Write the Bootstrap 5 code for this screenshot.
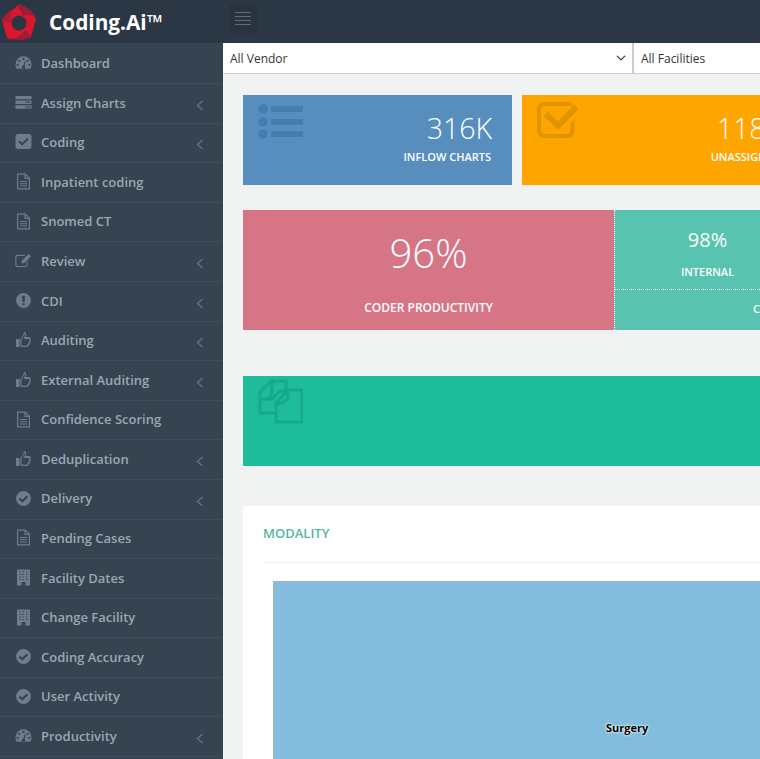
<!DOCTYPE html>
<html lang="en"><head><meta charset="utf-8">
<title>Coding.Ai</title>
<link href="https://cdn.jsdelivr.net/npm/bootstrap@5.3.0/dist/css/bootstrap.min.css" rel="stylesheet">
<style>
html,body{height:759px;overflow:hidden}
body{font-family:"Open Sans","Liberation Sans",sans-serif;background:#f1f2f2;color:#fff;width:760px}
.shell{width:1300px;height:759px}
.side{width:223px;background:#364351;flex:none}
.brandbar{height:43px;background:#2b3745;padding-left:1px;gap:12px}
.brandname{font-size:20.8px;font-weight:700;line-height:1;color:#fff;padding-top:2px}
.side-list{padding-top:1.4px}
.menu-row{height:39.6px;border-bottom:1px solid #404c5a;color:#9ba7b3;font-size:13px;font-weight:600;padding-left:15px;padding-right:19px}
.menu-ico{width:17px;height:17px;fill:#707c8a;flex:none;margin-right:9px;position:relative;top:-1px}
.menu-chev{width:8px;height:11px;stroke:#667280;stroke-width:1.4;fill:none;margin-left:auto;position:relative;top:2px}
.main{width:1077px;flex:none}
.topstrip{height:43px;background:#2b3745;padding:4px 0 0 6px}
.togglebox{width:28px;height:29px;background:#28333f;border-radius:2px}
.togglebox i{display:block;width:16px;height:1px;background:#5f6c78;margin:1.5px 0}
.filterbar{height:31px;background:#fff;border-bottom:1px solid #ccc}
.filter-sel{height:30px;border:0;border-radius:0;font-size:12px;color:#333;padding:1px 0 0 7px;background-position:right 5px center;background-size:12px 10px;font-family:inherit}
.filter-a{width:411px;border-right:2px solid #ccc}
.filter-b{width:400px}
.content{padding:21px 20px 0 20px}
.tilerow{column-gap:10px}
.tile{width:269px;height:90px;padding:0 20px 0 15px;position:relative;flex:none}
.tile-wide{width:280px}
.tile-big{font-size:28.5px;font-weight:300;line-height:1;margin-top:19px;text-align:right}
.tile-lab{font-size:11px;font-weight:600;text-align:right;margin-top:7.500px;line-height:1.2;padding-right:1px}
.tile-ico{position:absolute;left:15px;top:6px;width:45px;height:45px}
.tile-ico-up{top:3px}
.tone-blue{background:#578ebe}
.tone-amber{background:#ffa500}
.tone-rose{background:#d67585}
.tone-teal{background:#58c3ae}
.tone-green{background:#1dbd9a}
.prod{margin-top:25px;height:120px}
.prod-main{width:371px;text-align:center;flex:none}
.prod-big{font-size:40px;font-weight:300;line-height:1;margin-top:23px}
.prod-lab{font-size:12px;font-weight:600;margin-top:28px;line-height:1.2}
.prod-side{width:372px;border-left:1px dotted #fff;flex:none}
.split-upper{flex:0 0 80px;height:80px;border-bottom:1px dotted #fff;padding-right:186px;text-align:center;overflow:hidden}
.prod-mid{font-size:20px;line-height:1;margin-top:20px}
.prod-sm{font-size:11px;font-weight:600;margin-top:15px;line-height:1.2}
.split-lower{font-size:11px;font-weight:600;line-height:1.2;padding-top:12px;padding-left:138px}
.banner{height:90px;margin-top:46px;width:1000px;position:relative}
.panel{margin-top:40px;background:#fff;height:300px;width:1000px;padding:0 20px}
.panel-title{height:57px;border-bottom:1px solid #eee;font-size:13px;font-weight:600;color:#54b5a3;padding-top:18px;line-height:18px}
.tree{margin:18px 0 0 10px;height:240px;background:#82bddd;border-top:1px solid #9fb6c8;border-left:1px solid #9fb6c8;position:relative}
.tree-label{position:absolute;left:332px;top:138px;font-size:11px;font-weight:700;color:#000;text-shadow:0 0 3px #fff,0 0 2px #fff;line-height:15px}
</style></head>
<body>
<svg width="0" height="0" class="d-none" aria-hidden="true">
<defs>
<symbol id="i-gauge" viewBox="0 0 18 16"><path fill-rule="evenodd" d="M9 1.500A8.500 8.500 0 0 0 .5 10c0 1.700.5 3.300 1.300 4.500h14.400c.8-1.200 1.300-2.800 1.300-4.500A8.500 8.500 0 0 0 9 1.500zM9 3a1.200 1.200 0 1 1 0 2.400A1.200 1.200 0 0 1 9 3zM4.500 5a1.200 1.200 0 1 1 0 2.400 1.200 1.200 0 0 1 0-2.400zm9 0a1.200 1.200 0 1 1 0 2.400 1.200 1.200 0 0 1 0-2.400zM2.800 9.300a1.200 1.200 0 1 1 0 2.400 1.200 1.200 0 0 1 0-2.400zm12.400 0a1.200 1.200 0 1 1 0 2.400 1.200 1.200 0 0 1 0-2.400zM10.600 6.200l.9.300-1.300 5.300a1.800 1.800 0 1 1-1.500-.4z"/></symbol>
<symbol id="i-server" viewBox="0 0 18 16"><path fill-rule="evenodd" d="M.5 1h17v3.500H.5zM.5 6h17v3.500H.5zM.5 11h17v3.500H.5zM11 7.200v1h5v-1zM11 12.200v1h5v-1z"/></symbol>
<symbol id="i-check" viewBox="0 0 16 16"><path fill-rule="evenodd" d="M3 1h10a2.500 2.500 0 0 1 2.500 2.500v9A2.500 2.500 0 0 1 13 15H3A2.500 2.500 0 0 1 .5 12.500v-9A2.500 2.500 0 0 1 3 1zm3.700 11 6.200-6.200-1.300-1.300-4.900 4.900-2.300-2.300-1.300 1.300z"/></symbol>
<symbol id="i-file" viewBox="0 0 16 17"><path fill-rule="evenodd" d="M1.500.5H10L14.500 5v11.500h-13zM2.700 1.700v13.600h10.600V6H9V1.700zM10.200 2.300v2.500h2.500zM4.500 8h7v1h-7zm0 2.200h7v1h-7zm0 2.200h7v1h-7z"/></symbol>
<symbol id="i-edit" viewBox="0 0 18 16"><path fill-rule="evenodd" d="M2.500 2H11L9.800 3.200H2.500a1 1 0 0 0-1 1v8.600a1 1 0 0 0 1 1h8.600a1 1 0 0 0 1-1V9.500l1.200-1.200v4.500a2.200 2.200 0 0 1-2.200 2.200H2.500A2.200 2.200 0 0 1 .3 12.800V4.200A2.200 2.200 0 0 1 2.500 2zM14.500 1l2.500 2.500-7.500 7.500H7V8.500z"/></symbol>
<symbol id="i-alert" viewBox="0 0 16 16"><path fill-rule="evenodd" d="M8 1a7 7 0 1 1 0 14A7 7 0 0 1 8 1zM6.700 3.500l.2 6h2.200l.2-6zM6.900 10.500v2h2.200v-2z"/></symbol>
<symbol id="i-thumb" viewBox="0 0 16 17"><path fill-rule="evenodd" d="M.5 8H4v8H.5zM8.500 1c1.500 0 2.200 1 2.200 2.300 0 1-.4 2-.8 2.800h3.500c1 0 1.900.8 1.900 1.900 0 .5-.2 1-.5 1.300.2.300.3.700.3 1.100 0 .7-.4 1.200-.9 1.500.1.200.1.500.1.700 0 .8-.5 1.400-1.200 1.700 0 1-.8 1.700-2 1.700H8c-1.300 0-2.300-.5-3.200-1V8c1.500-1.200 3.200-3.500 3.700-7zM9 2.300c-.6 2.700-2 4.800-3 6V14c.6.400 1.300.8 2.200.8h2.600c.6 0 .9-.3.9-.8 0-.3-.1-.5-.2-.6.700 0 1.300-.3 1.300-1 0-.3-.1-.5-.3-.7.600-.1 1.100-.4 1.100-1 0-.4-.2-.7-.5-.9.500-.1.900-.4.900-1 0-.5-.4-.8-.9-.8H8l.5-1c.5-1 1-2 1-3 0-.4-.2-.7-.5-.7z"/></symbol>
<symbol id="i-okay" viewBox="0 0 16 16"><path fill-rule="evenodd" d="M8 1a7 7 0 1 1 0 14A7 7 0 0 1 8 1zM6.900 12l5.500-5.500-1.400-1.400-4.100 4.100-2-2-1.400 1.400z"/></symbol>
<symbol id="i-build" viewBox="0 0 14 17"><path fill-rule="evenodd" d="M.5.500h13v16h-13zM3 2.500v1h1.500v-1zM6 2.500v1h1.500v-1zM9.500 2.500v1H11v-1zM3 5v1h1.500V5zM6 5v1h1.500V5zM9.500 5v1H11V5zM3 7.500v1h1.500v-1zM6 7.500v1h1.500v-1zM9.500 7.500v1H11v-1zM3 10v1h1.500v-1zM6 10v1h1.500v-1zM9.500 10v1H11v-1zM5 13v3.500h4V13z"/></symbol>
<symbol id="i-chev" viewBox="0 0 8 11"><path d="M6.500 1 1.500 5.500l5 4.500"/></symbol>
</defs>
</svg>
<div class="shell d-flex">
<aside class="side">
  <div class="brandbar d-flex align-items-center">
    <svg width="36" height="36" viewBox="0 0 36 36" aria-hidden="true">
      <path fill="#d9172f" stroke="#d9172f" stroke-width="4" stroke-linejoin="round" d="M18 3 33 15 28 32 8 33 3 16z"/>
      <path fill="#9d1d36" d="M17 .5C24 1 32 7 35.500 14 31 10.500 26 10 22 12 20 8 18 5 17 .5z"/>
      <path fill="#9d1d36" d="M30 33.500C25 36 16 36.500 9 35 16 34.500 21 31.500 24 25.500 27 29 28.500 31 30 33.500z"/>
      <path fill="#a91c35" d="M1 17C3 12 6 8 11 5 9 9 9 13 10.500 18 7 18 4 18 1 17z"/>
      <circle cx="18" cy="19" r="7.500" fill="#2b3745"/>
    </svg>
    <div class="brandname">Coding.Ai™</div>
  </div>
  <nav class="side-list">
    <div class="menu-row d-flex align-items-center"><svg class="menu-ico"><use href="#i-gauge"/></svg>Dashboard</div>
    <div class="menu-row d-flex align-items-center"><svg class="menu-ico"><use href="#i-server"/></svg>Assign Charts<svg class="menu-chev"><use href="#i-chev"/></svg></div>
    <div class="menu-row d-flex align-items-center"><svg class="menu-ico"><use href="#i-check"/></svg>Coding<svg class="menu-chev"><use href="#i-chev"/></svg></div>
    <div class="menu-row d-flex align-items-center"><svg class="menu-ico"><use href="#i-file"/></svg>Inpatient coding</div>
    <div class="menu-row d-flex align-items-center"><svg class="menu-ico"><use href="#i-file"/></svg>Snomed CT</div>
    <div class="menu-row d-flex align-items-center"><svg class="menu-ico"><use href="#i-edit"/></svg>Review<svg class="menu-chev"><use href="#i-chev"/></svg></div>
    <div class="menu-row d-flex align-items-center"><svg class="menu-ico"><use href="#i-alert"/></svg>CDI<svg class="menu-chev"><use href="#i-chev"/></svg></div>
    <div class="menu-row d-flex align-items-center"><svg class="menu-ico"><use href="#i-thumb"/></svg>Auditing<svg class="menu-chev"><use href="#i-chev"/></svg></div>
    <div class="menu-row d-flex align-items-center"><svg class="menu-ico"><use href="#i-thumb"/></svg>External Auditing<svg class="menu-chev"><use href="#i-chev"/></svg></div>
    <div class="menu-row d-flex align-items-center"><svg class="menu-ico"><use href="#i-file"/></svg>Confidence Scoring</div>
    <div class="menu-row d-flex align-items-center"><svg class="menu-ico"><use href="#i-thumb"/></svg>Deduplication<svg class="menu-chev"><use href="#i-chev"/></svg></div>
    <div class="menu-row d-flex align-items-center"><svg class="menu-ico"><use href="#i-okay"/></svg>Delivery<svg class="menu-chev"><use href="#i-chev"/></svg></div>
    <div class="menu-row d-flex align-items-center"><svg class="menu-ico"><use href="#i-file"/></svg>Pending Cases</div>
    <div class="menu-row d-flex align-items-center"><svg class="menu-ico"><use href="#i-build"/></svg>Facility Dates</div>
    <div class="menu-row d-flex align-items-center"><svg class="menu-ico"><use href="#i-build"/></svg>Change Facility</div>
    <div class="menu-row d-flex align-items-center"><svg class="menu-ico"><use href="#i-okay"/></svg>Coding Accuracy</div>
    <div class="menu-row d-flex align-items-center"><svg class="menu-ico"><use href="#i-okay"/></svg>User Activity</div>
    <div class="menu-row d-flex align-items-center"><svg class="menu-ico"><use href="#i-gauge"/></svg>Productivity<svg class="menu-chev"><use href="#i-chev"/></svg></div>
  </nav>
</aside>
<main class="main">
  <div class="topstrip"><div class="togglebox d-flex flex-column align-items-center justify-content-center"><i></i><i></i><i></i><i></i></div></div>
  <div class="filterbar d-flex">
    <select class="form-select filter-sel filter-a"><option>All Vendor</option></select>
    <select class="form-select filter-sel filter-b"><option>All Facilities</option></select>
  </div>
  <div class="content">
    <div class="d-flex tilerow">
      <div class="tile tone-blue">
        <svg class="tile-ico" viewBox="0 0 45 45" fill="#477dae"><circle cx="5" cy="8" r="4.800"/><circle cx="5" cy="21" r="4.800"/><circle cx="5" cy="33" r="4.800"/><rect x="13" y="5" width="32" height="6"/><rect x="13" y="18" width="32" height="6"/><rect x="13" y="30" width="32" height="6"/></svg>
        <div class="tile-big">316K</div>
        <div class="tile-lab">INFLOW CHARTS</div>
      </div>
      <div class="tile tile-wide tone-amber">
        <svg class="tile-ico" viewBox="0 0 45 45" fill="#e09400"><path fill-rule="evenodd" d="M8 1h24c2 0 3 .5 3 1v3H8C5.500 5 4 6.500 4 8.500v21C4 31.500 5.500 33 8 33h22c2 0 3.500-1.500 3.500-3.500V22l4-4v11.500c0 4.500-3 7.500-7.500 7.500H8c-4.500 0-8-3-8-7.500v-21C0 4 3.500 1 8 1z"/><path d="M6.500 15l4.500-4.500 10 10L37 3.500l4.500 4.500L21 29z"/></svg>
        <div class="tile-big">118K</div>
        <div class="tile-lab">UNASSIGNED</div>
      </div>
    </div>
    <div class="prod d-flex">
      <div class="prod-main tone-rose">
        <div class="prod-big">96%</div>
        <div class="prod-lab">CODER PRODUCTIVITY</div>
      </div>
      <div class="prod-side tone-teal d-flex flex-column">
        <div class="split-upper">
          <div class="prod-mid">98%</div>
          <div class="prod-sm">INTERNAL</div>
        </div>
        <div class="split-lower">CLIENT</div>
      </div>
    </div>
    <div class="banner tone-green">
      <svg class="tile-ico tile-ico-up" viewBox="0 0 45 45" fill="none" stroke="#17a98a" stroke-width="3"><path d="M14 2h14v10H22l-8 8H2v14h14"/><path d="M2 20V13L13 2h1v10c0 4-2 8-6 8z"/><path d="M30 11h14v32H18V24L30 11z"/><path d="M18 24c6 2 12-2 12-8v-5"/></svg>
    </div>
    <section class="panel">
      <div class="panel-title">MODALITY</div>
      <div class="tree"><span class="tree-label">Surgery</span></div>
    </section>
  </div>
</main>
</div>
<script src="https://cdn.jsdelivr.net/npm/bootstrap@5.3.0/dist/js/bootstrap.bundle.min.js"></script>
</body></html>
